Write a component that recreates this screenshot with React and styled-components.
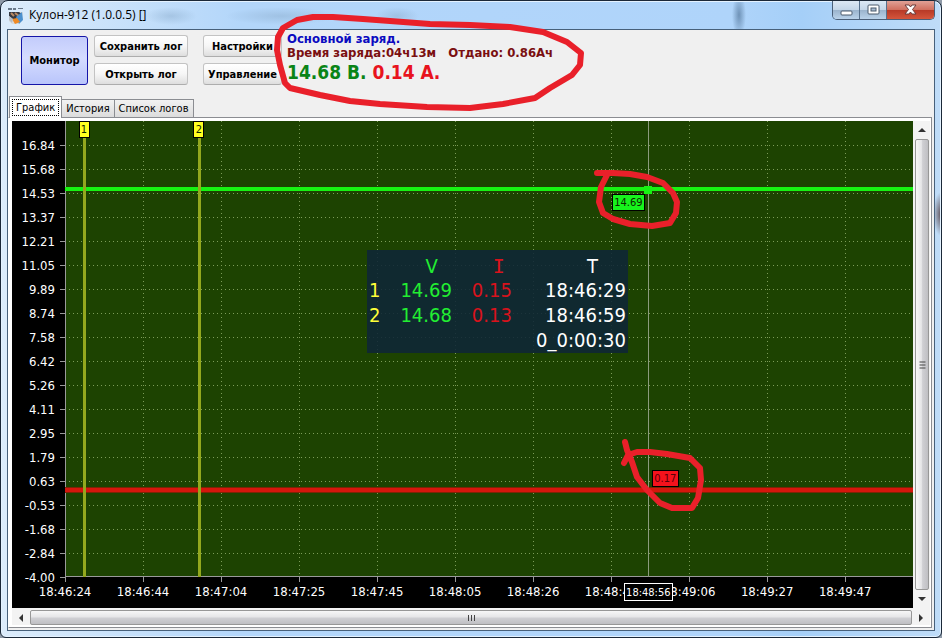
import styled, { createGlobalStyle, css } from "styled-components"

const GlobalStyle = createGlobalStyle`
    * {
        box-sizing: border-box;
    }
    body {
        margin: 0;
        background: #8f9aa8;
        font-family: "DejaVu Sans Condensed", "DejaVu Sans", sans-serif;
        font-size: 11px;
        color: #000;
    }
    button {
        font: inherit;
        color: inherit;
        padding: 0;
        margin: 0;
    }
`

const Window = styled.div`
    position: relative;
    display: flex;
    flex-direction: column;
    min-height: 100vh;
    padding: 0 6px 6px 6px;
    border: 1px solid #1b2838;
    border-radius: 8px 8px 6px 6px;
    background: radial-gradient(ellipse 26px 9px at 170px 15px, #8fb0d088, transparent),
        radial-gradient(ellipse 56px 9px at 280px 15px, #8fb0d088, transparent),
        radial-gradient(ellipse 22px 9px at 396px 15px, #8fb0d088, transparent),
        radial-gradient(ellipse 7px 22px at 738px 14px, #6f93b8, transparent),
        radial-gradient(ellipse 8px 22px at 100% 213px, #5f5058, transparent),
        linear-gradient(90deg, #dcecfb 0, #b3d6fa 240px, #afd4fa 730px, #a5cff8 800px, #bfdcf8 100%);
    box-shadow: inset 0 0 0 1px #e4f2ff;
`

const TitleBar = styled.header`
    display: flex;
    align-items: flex-start;
    height: 28px;
    padding-left: 1px;
    h1 {
        flex: 1;
        margin: 0 0 0 5px;
        font: 12px/28px "Open Sans", "Noto Sans", sans-serif;
    }
    & > svg {
        margin-top: 6px;
    }
`

const Caption = styled.div`
    display: flex;
    height: 19px;
    border: 1px solid #4a5f78;
    border-top: 0;
    border-radius: 0 0 5px 5px;
    overflow: hidden;
`

const CaptionButton = styled.button`
    display: flex;
    align-items: center;
    justify-content: center;
    width: ${(props) => (props.$close ? 47 : 27)}px;
    border: 0;
    border-right: ${(props) => (props.$close ? 0 : "1px solid #56708c")};
    background: ${(props) =>
        props.$close
            ? "linear-gradient(#e0a196, #d0705f 48%, #b83a27 52%, #d5563c)"
            : "linear-gradient(#dce8f4, #c4d6e8 48%, #9bb4cd 52%, #b9d2ea)"};
`

const Client = styled.main`
    display: flex;
    flex: 1;
    flex-direction: column;
    border: 1px solid #47607a;
    background: #f0f0f0;
`

const Toolbar = styled.div`
    display: flex;
    align-items: flex-start;
    height: 66px;
    padding: 2px 0 0 13px;
`

const ButtonColumn = styled.div`
    display: flex;
    flex-direction: column;
    gap: 6px;
    width: ${(props) => props.$width}px;
    margin-top: 3px;
    margin-right: ${(props) => props.$after}px;
`

const PushButton = styled.button`
    height: 22px;
    border: 1px solid #c3c3c3;
    border-bottom-color: #adadad;
    border-radius: 3px;
    background: linear-gradient(#fff, #f6f6f6 50%, #dedede);
    font-weight: bold;
    white-space: nowrap;
    ${(props) =>
        props.$large &&
        css`
            width: 67px;
            height: 49px;
            margin: 4px 6px 0 0;
            border-color: #1515a8;
            background: linear-gradient(#c3ccfb, #d5dcff 45%, #b9c5fb);
        `}
`

const Status = styled.section`
    font-size: 13px;
    font-weight: bold;
    line-height: 14px;
    white-space: pre;
    p {
        margin: 0;
    }
`

const Phase = styled.p`
    color: #0b0bc0;
`

const Elapsed = styled.p`
    color: #7a0f10;
`

const Readout = styled.p`
    color: #0a8417;
    font-size: 19px;
    line-height: 24px;
    span {
        color: #e8131d;
    }
`

const Tabs = styled.div`
    display: flex;
    align-items: flex-end;
    height: 21px;
    padding-left: 1px;
`

const Tab = styled.button`
    position: relative;
    height: 18px;
    padding: 0 4px;
    border: 1px solid #8b8d92;
    border-bottom: 0;
    border-left-width: ${(props) => (props.$first ? 1 : 0)}px;
    background: linear-gradient(#f2f2f2, #dcdcdc);
    ${(props) =>
        props.$active &&
        css`
            height: 22px;
            margin: 0 0 -1px;
            padding: 0 2px;
            background: #fff;
            z-index: 1;
            span {
                display: block;
                padding: 0 3px;
                border: 1px dotted #000;
                line-height: 15px;
            }
        `}
`

const Pane = styled.div`
    display: grid;
    flex: 1;
    grid-template-columns: 1fr 17px;
    grid-template-rows: 1fr 17px;
    margin-right: 2px;
    margin-bottom: 2px;
    padding: 3px 1px 2px 3px;
    border: 1px solid #8b8d92;
    border-left-color: #fff;
    background: #fff;
`

const Chart = styled.div`
    display: grid;
    grid-template-columns: 53px 1fr;
    grid-template-rows: minmax(380px, 1fr) 31px;
    overflow: hidden;
    background: #000;
    color: #fff;
    font-size: 13px;
`

const YAxis = styled.div`
    display: flex;
    grid-row: 1 / 3;
    grid-column: 1;
    flex-direction: column;
    padding: 12px 0 19px;
    div {
        display: flex;
        flex: 1;
        align-items: center;
        justify-content: flex-end;
        gap: 5px;
    }
    div::after {
        content: "";
        width: 5px;
        height: 1px;
        background: #9a9a9a;
    }
`

const XAxis = styled.div`
    position: relative;
    display: flex;
    grid-row: 2;
    grid-column: 2;
    margin-left: -4.6%;
`

const XLabel = styled.div`
    display: flex;
    flex: 0 0 8.796%;
    flex-direction: column;
    align-items: center;
    line-height: 20px;
    &::before {
        content: "";
        width: 1px;
        height: 5px;
        background: #9a9a9a;
    }
`

const Plot = styled.div`
    position: relative;
    grid-row: 1;
    grid-column: 2;
    background: #1d4301;
    svg {
        display: block;
        position: absolute;
        width: 100%;
        height: 100%;
    }
`

const Flag = styled.div`
    position: absolute;
    top: ${(props) => props.$top};
    left: ${(props) => props.$left};
    display: flex;
    align-items: center;
    justify-content: center;
    width: ${(props) => props.$width}px;
    height: 17px;
    border: 1px solid #000;
    background: ${(props) => props.$fill};
    color: ${(props) => props.$ink || "#0d2600"};
    font-size: 11px;
`

const CursorTime = styled(Flag)`
    height: 18px;
    border-color: #fff;
    color: #fff;
    z-index: 1;
`

const Markers = styled.table`
    position: absolute;
    top: 129px;
    left: 35.6%;
    width: 261px;
    border-collapse: separate;
    border-spacing: 0;
    table-layout: fixed;
    padding-top: 4px;
    background: #0f2537e0;
    color: #fff;
    font-size: 20px;
    line-height: 25px;
    th,
    td {
        padding: 0 2px 0 0;
        font-weight: normal;
        text-align: right;
    }
    tbody th {
        padding: 0 0 0 2px;
        color: #ffff38;
        text-align: left;
    }
    .v {
        color: #22ee32;
    }
    .i {
        color: #d8131c;
    }
    thead th {
        line-height: 24px;
    }
    thead .v {
        padding-right: 16px;
    }
    thead .i {
        padding-right: 9px;
        font-family: "DejaVu Sans Mono", monospace;
    }
    thead .t {
        padding-right: 30px;
    }
`

const ScrollBar = styled.div`
    display: flex;
    flex-direction: ${(props) => (props.$vertical ? "column" : "row")};
    grid-column: ${(props) => (props.$vertical ? "auto" : "1 / 3")};
    padding: ${(props) => (props.$vertical ? "0 1px 0 2px" : "2px 0 0")};
    background: #f3f3f3;
`

const ArrowButton = styled.button`
    display: flex;
    flex: 0 0 18px;
    align-items: center;
    justify-content: center;
    border: 0;
    background: none;
`

const Thumb = styled.div`
    display: flex;
    flex: 1;
    align-items: center;
    justify-content: center;
    border: 1px solid #979797;
    border-radius: 2px;
    background: linear-gradient(
        ${(props) => (props.$vertical ? "90deg" : "180deg")},
        #f7f7f7,
        #e6e6e8 45%,
        #cfcfd3 55%,
        #bfbfc3
    );
    svg {
        transform: ${(props) => (props.$vertical ? "rotate(90deg)" : "none")};
    }
`

const Ink = styled.svg`
    position: absolute;
    top: -1px;
    left: -1px;
    z-index: 2;
    pointer-events: none;
`

const voltages = [
    "16.84", "15.68", "14.53", "13.37", "12.21", "11.05", "9.89", "8.74", "7.58", "6.42",
    "5.26", "4.11", "2.95", "1.79", "0.63", "-0.53", "-1.68", "-2.84", "-4.00",
]

const times = [
    "18:46:24", "18:46:44", "18:47:04", "18:47:25", "18:47:45", "18:48:05",
    "18:48:26", "18:48:46", "18:49:06", "18:49:27", "18:49:47",
]

const ripples = [13.6, 15, 17.3, 24.5, 32.2, 34.4, 52.2, 53.4, 82.3, 97.4]

const AppIcon = () => (
    <svg width="16" height="17" viewBox="0 0 16 17">
        <path d="M0 1h4v2H0zM5 1h3v2H5zM10 1h5v1h-5z" fill="#68788a" />
        <path d="M1 5h14l-1 9-4 3H4l-3-3z" fill="#d8dadb" />
        <path d="M1 5h10l3 2-3 5-5 1-5-4z" fill="#343942" />
        <path d="M3 6l3 3M7 6l4 3" stroke="#b98a64" strokeWidth="2" />
        <path d="M8 10l6-5 1 8-4 4z" fill="#4c91cf" />
        <path d="M4 12l5-1 3 4-5 2z" fill="#ee8a26" />
        <path d="M1 9l4 3-1 4-3-3z" fill="#b5bdc5" />
    </svg>
)

const Arrow = ({ points }) => (
    <svg width="8" height="8" viewBox="0 0 8 8">
        <polygon points={points} fill="#333" />
    </svg>
)

const Grip = () => (
    <svg width="9" height="8" viewBox="0 0 9 8">
        <path d="M1 1v6M4 1v6M7 1v6" stroke="#444" transform="translate(.5 0)" />
    </svg>
)

const Scroll = ({ vertical }) => (
    <ScrollBar $vertical={vertical}>
        <ArrowButton aria-label={vertical ? "Вверх" : "Влево"}>
            <Arrow points={vertical ? "0,6 4,2 8,6" : "6,0 2,4 6,8"} />
        </ArrowButton>
        <Thumb $vertical={vertical}>
            <Grip />
        </Thumb>
        <ArrowButton aria-label={vertical ? "Вниз" : "Вправо"}>
            <Arrow points={vertical ? "0,2 4,6 8,2" : "2,0 6,4 2,8"} />
        </ArrowButton>
    </ScrollBar>
)

const Graph = () => (
    <svg shapeRendering="crispEdges">
        {voltages.map((v, i) => {
            const y = `${((i + 1) * 100) / 19}%`
            return <line key={v} x1="0" x2="100%" y1={y} y2={y} stroke="#7c9c58" strokeDasharray="1 3" />
        })}
        {times.map((t, i) => {
            const x = `${i * 9.2}%`
            return <line key={t} x1={x} x2={x} y1="0" y2="100%" stroke="#7c9c58" strokeDasharray="1 3" />
        })}
        <line x1="0" x2="100%" y1="100%" y2="100%" stroke="#9a9a9a" strokeWidth="2" />
        <line x1="0" x2="0" y1="0" y2="100%" stroke="#9a9a9a" strokeWidth="2" />
        <line x1="0" x2="100%" y1="15%" y2="15%" stroke="#17f312" strokeWidth="4" />
        <rect x="15.3%" y="14.4%" width="5" height="3" fill="#17f312" />
        <line x1="0" x2="100%" y1="81%" y2="81%" stroke="#7c2505" strokeWidth="6" />
        <line x1="0" x2="100%" y1="81%" y2="81%" stroke="#d5160c" strokeWidth="4" />
        {ripples.map((x) => (
            <rect key={x} x={`${x}%`} y="80.4%" width="4" height="3" fill="#d5160c" />
        ))}
        <line x1="2.3%" x2="2.3%" y1="0" y2="100%" stroke="#93a81e" strokeWidth="3" />
        <line x1="15.85%" x2="15.85%" y1="0" y2="100%" stroke="#93a81e" strokeWidth="3" />
        <line x1="68.75%" x2="68.75%" y1="0" y2="100%" stroke="#8b9b7d" />
        <rect x="68.3%" y="14.2%" width="8" height="8" fill="#17f312" />
    </svg>
)

const MarkerTable = () => (
    <Markers>
        <colgroup>
            <col width="22" />
            <col width="65" />
            <col width="60" />
            <col width="114" />
        </colgroup>
        <thead>
            <tr>
                <td></td>
                <th className="v">V</th>
                <th className="i">I</th>
                <th className="t">T</th>
            </tr>
        </thead>
        <tbody>
            <tr>
                <th>1</th>
                <td className="v">14.69</td>
                <td className="i">0.15</td>
                <td>18:46:29</td>
            </tr>
            <tr>
                <th>2</th>
                <td className="v">14.68</td>
                <td className="i">0.13</td>
                <td>18:46:59</td>
            </tr>
            <tr>
                <td colSpan="4">0_0:00:30</td>
            </tr>
        </tbody>
    </Markers>
)

const App = () => {
    return (
        <>
            <GlobalStyle />
            <Window>
                <TitleBar>
                    <AppIcon />
                    <h1>Кулон-912 (1.0.0.5) []</h1>
                    <Caption>
                        <CaptionButton aria-label="Свернуть">
                            <svg width="13" height="14">
                                <rect x="1" y="8" width="11" height="4" rx="1" fill="#fff" stroke="#4b5b6d" />
                            </svg>
                        </CaptionButton>
                        <CaptionButton aria-label="Развернуть">
                            <svg width="13" height="12">
                                <rect x="1" y="1" width="11" height="9" rx="1" fill="#fff" stroke="#4b5b6d" />
                                <rect x="4" y="4" width="5" height="3" fill="#a9bdd2" stroke="#4b5b6d" />
                            </svg>
                        </CaptionButton>
                        <CaptionButton $close aria-label="Закрыть">
                            <svg width="13" height="12" viewBox="0 0 13 12">
                                <path
                                    d="M1 1h4l1.500 2L8 1h4L8.500 5.500 12 10H8L6.500 8 5 10H1l3.500-4.500z"
                                    fill="#fff"
                                    stroke="#6b3c3a"
                                />
                            </svg>
                        </CaptionButton>
                    </Caption>
                </TitleBar>

                <Client>
                    <Toolbar>
                        <PushButton $large>Монитор</PushButton>
                        <ButtonColumn $width={94} $after={15}>
                            <PushButton>Сохранить лог</PushButton>
                            <PushButton>Открыть лог</PushButton>
                        </ButtonColumn>
                        <ButtonColumn $width={79} $after={5}>
                            <PushButton>Настройки</PushButton>
                            <PushButton>Управление</PushButton>
                        </ButtonColumn>
                        <Status>
                            <Phase>Основной заряд.</Phase>
                            <Elapsed>{"Время заряда:04ч13м   Отдано: 0.86Ач"}</Elapsed>
                            <Readout>
                                14.68 В. <span>0.14 А.</span>
                            </Readout>
                        </Status>
                    </Toolbar>

                    <Tabs role="tablist">
                        <Tab role="tab" $first $active>
                            <span>График</span>
                        </Tab>
                        <Tab role="tab">История</Tab>
                        <Tab role="tab">Список логов</Tab>
                    </Tabs>

                    <Pane>
                        <Chart>
                            <YAxis>
                                {voltages.map((v) => (
                                    <div key={v}>{v}</div>
                                ))}
                            </YAxis>
                            <Plot>
                                <Graph />
                                <Flag $top="0" $left="calc(2.3% - 6px)" $width={11} $fill="#ffff20">
                                    1
                                </Flag>
                                <Flag $top="0" $left="calc(15.85% - 6px)" $width={11} $fill="#ffff20">
                                    2
                                </Flag>
                                <Flag $top="16%" $left="64.5%" $width={33} $fill="#17f31c">
                                    14.69
                                </Flag>
                                <Flag $top="76.5%" $left="69.2%" $width={27} $fill="#f5121c" $ink="#5a0008">
                                    0.17
                                </Flag>
                                <MarkerTable />
                            </Plot>
                            <XAxis>
                                {times.map((t) => (
                                    <XLabel key={t}>{t}</XLabel>
                                ))}
                                <CursorTime as="time" $top="6px" $left="67.4%" $width={49} $fill="#000">
                                    18:48:56
                                </CursorTime>
                            </XAxis>
                        </Chart>
                        <Scroll vertical />
                        <Scroll />
                    </Pane>
                </Client>

                <Ink width="720" height="520" fill="none" stroke="#e9202a" strokeWidth="6" strokeLinecap="round" strokeLinejoin="round">
                    <path d="M285 83L280 65 277 50 278 37 283 28 297 20 313 17 333 17 363 19 390 21 430 24 470 25 510 27 543 32 567 42 581 53 580 65 572 75 550 88 535 98 503 104 470 108 427 107 380 104 350 101 320 95 290 88Z" />
                    <path d="M597 173L613 173 630 174 647 177 663 183 673 193 677 202 676 213 670 223 652 226 630 224 613 219 603 213 599 202 601 187 607 175" />
                    <path d="M625 442L627 450 632 462 637 477 647 490 660 503 672 508 692 508 698 498 701 480 700 468 690 458 667 454 650 452 637 452 628 455 624 463" />
                </Ink>
            </Window>
        </>
    )
}

export default App
